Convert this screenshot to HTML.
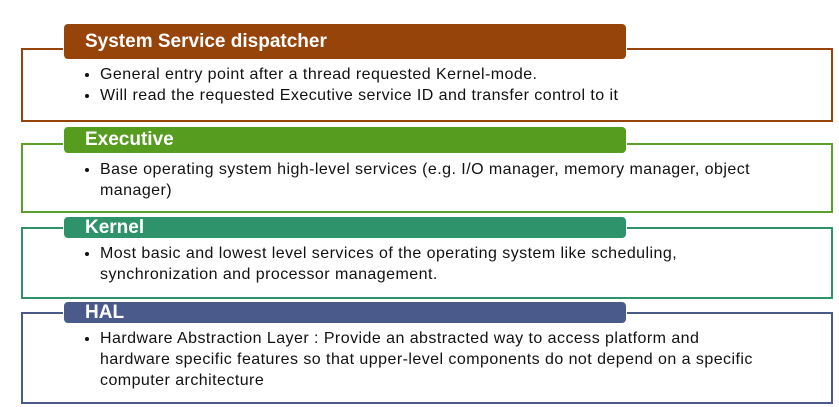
<!DOCTYPE html>
<html><head><style>
body{margin:0;width:839px;height:407px;background:#fff;position:relative;overflow:hidden;font-family:"Liberation Sans",sans-serif}
.b{position:absolute;left:21px;width:808px;border:2px solid}
.h{position:absolute;left:63px;width:564px;border-radius:5px;color:#fff;font-weight:bold;font-size:19px;box-sizing:border-box;padding-left:21px;display:flex;align-items:center;border:1px solid #fff}
ul{position:absolute;left:86px;margin:0;padding:0 0 0 14px;font-size:16px;letter-spacing:0.45px;line-height:21px;color:#111;white-space:nowrap}
li{margin:0}
</style></head><body>
<div class="b" style="top:48px;height:70px;border-color:#97440b"></div>
<div class="h" style="top:23px;height:37px;background:#97440b">System Service dispatcher</div>
<ul style="top:64px"><li>General entry point after a thread requested Kernel-mode.</li><li>Will read the requested Executive service ID and transfer control to it</li></ul>

<div class="b" style="top:143px;height:66px;border-color:#5aa02a"></div>
<div class="h" style="top:126px;height:28px;background:#559c1f">Executive</div>
<ul style="top:159px"><li>Base operating system high-level services (e.g. I/O manager, memory manager, object<br>manager)</li></ul>

<div class="b" style="top:227px;height:68px;border-color:#2e936a"></div>
<div class="h" style="top:216px;height:23px;background:#2e936a">Kernel</div>
<ul style="top:243px"><li>Most basic and lowest level services of the operating system like scheduling,<br>synchronization and processor management.</li></ul>

<div class="b" style="top:312px;height:88px;border-color:#4a5a8a"></div>
<div class="h" style="top:301px;height:23px;background:#4a5a8a">HAL</div>
<ul style="top:328px"><li>Hardware Abstraction Layer : Provide an abstracted way to access platform and<br>hardware specific features so that upper-level components do not depend on a specific<br>computer architecture</li></ul>
</body></html>
